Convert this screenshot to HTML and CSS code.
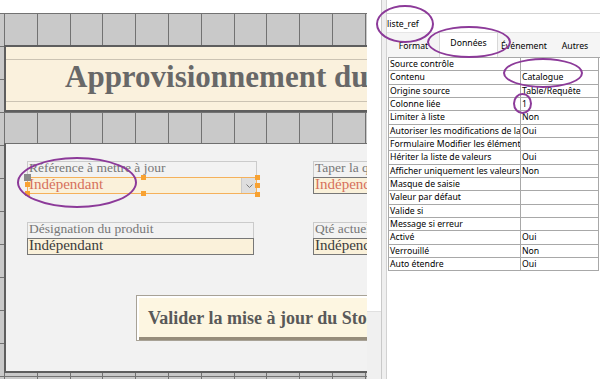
FILE: index.html
```html
<!DOCTYPE html>
<html lang="fr">
<head>
  <meta charset="UTF-8" />
  <meta name="viewport" content="width=device-width, initial-scale=1" />
  <title>Approvisionnement - mode création</title>
  <link rel="stylesheet" href="styles.css">
</head>
<body>

  <div class="screen">

    <div class="designer">
      <div class="grid">

        <div class="head-section">
          <div class="title-box">Approvisionnement du Stock</div>
        </div>

        <div class="detail-section">
          <div class="form">
            <div class="field">
              <div class="label">Référence à mettre à jour</div>
              <div class="input combo">
                <span class="value red">Indépendant</span>
                <span class="drop">
                  <svg width="7" height="4" viewBox="0 0 7 4"><path d="M0.5 0.5 L3.5 3.5 L6.5 0.5" fill="none" stroke="#7a7a7a" stroke-width="1"/></svg>
                </span>
                <span class="handle grab"></span>
                <span class="handle ml"></span>
                <span class="handle bl"></span>
                <span class="handle tm"></span>
                <span class="handle bm"></span>
                <span class="handle tr"></span>
                <span class="handle mr"></span>
                <span class="handle br"></span>
              </div>
            </div>
            <div class="field">
              <div class="label">Taper la quantité à ajouter</div>
              <div class="input"><span class="value red">Indépendant</span></div>
            </div>
            <div class="field short">
              <div class="label">Désignation du produit</div>
              <div class="input"><span class="value">Indépendant</span></div>
            </div>
            <div class="field">
              <div class="label">Qté actuelle en stock</div>
              <div class="input"><span class="value">Indépendant</span></div>
            </div>
          </div>
          <button class="validate">Valider la mise à jour du Stock</button>
        </div>

      </div>
    </div>

    <div class="gutter">
      <div class="gutter-foot"></div>
    </div>

    <div class="props">
      <div class="sheet">
        <div class="name-box">liste_ref</div>
        <div class="tabs">
          <span class="tab t-format">Format</span>
          <span class="tab t-data active">Données</span>
          <span class="tab t-event">Événement</span>
          <span class="tab t-other">Autres</span>
        </div>
        <div class="prop-table">
          <div class="k">Source contrôle</div><div class="v"></div>
          <div class="k">Contenu</div><div class="v">Catalogue</div>
          <div class="k">Origine source</div><div class="v">Table/Requête</div>
          <div class="k">Colonne liée</div><div class="v">1</div>
          <div class="k">Limiter à liste</div><div class="v">Non</div>
          <div class="k">Autoriser les modifications de la liste</div><div class="v">Oui</div>
          <div class="k">Formulaire Modifier les éléments de liste</div><div class="v"></div>
          <div class="k">Hériter la liste de valeurs</div><div class="v">Oui</div>
          <div class="k">Afficher uniquement les valeurs</div><div class="v">Non</div>
          <div class="k">Masque de saisie</div><div class="v"></div>
          <div class="k">Valeur par défaut</div><div class="v"></div>
          <div class="k">Valide si</div><div class="v"></div>
          <div class="k">Message si erreur</div><div class="v"></div>
          <div class="k">Activé</div><div class="v">Oui</div>
          <div class="k">Verrouillé</div><div class="v">Non</div>
          <div class="k">Auto étendre</div><div class="v">Oui</div>
        </div>
      </div>
    </div>

  </div>

  <!-- annotations -->
  <span class="mark mark-name"></span>
  <span class="mark mark-tab"></span>
  <span class="mark mark-source"></span>
  <span class="mark mark-col"></span>
  <span class="mark mark-combo"></span>

</body>
</html>
```

FILE: styles.css
```css
* {
  box-sizing: border-box;
}

body {
  margin: 0;
  width: 600px;
  height: 379px;
  overflow: hidden;
  position: relative;
  background: #fff;
  font-family: "Liberation Serif", serif;
}

.screen {
  display: flex;
  height: 379px;
}

/* form designer */

.designer {
  width: 367px;
  flex: none;
  overflow: hidden;
  background: #fff;
}

.grid {
  margin-top: 13px;
  height: 366px;
  padding-top: 32px;
  background-color: #c9c9c9;
  background-image:
    repeating-linear-gradient(90deg, #727272 0 1px, transparent 1px 32.8px),
    repeating-linear-gradient(180deg, #727272 0 1px, transparent 1px 33px);
  background-position: 4px 0, 0 0;
}

.head-section {
  margin-left: 4px;
  height: 67px;
  border: 2px solid #5e5e5e;
  border-right: 0;
  background: #faf1dd;
  padding-top: 12px;
}

.title-box {
  height: 43px;
  border-top: 1px solid #cbc3b3;
  border-bottom: 1px solid #cbc3b3;
  padding-left: 59px;
  font-size: 31px;
  font-weight: bold;
  line-height: 33px;
  color: #686868;
  white-space: nowrap;
}

.detail-section {
  margin: 31px 0 0 4px;
  height: 230px;
  border-top: 1px solid #6f6f6f;
  border-left: 2px solid #5e5e5e;
  border-bottom: 2px solid #5e5e5e;
  background: #f2f2f2;
  padding: 17px 0 0 21px;
  overflow: hidden;
}

.form {
  display: grid;
  grid-template-columns: 230px 230px;
  column-gap: 56px;
  row-gap: 28px;
  width: 516px;
}

.field.short {
  width: 227px;
}

.label {
  height: 16px;
  border: 1px solid #cbcbcb;
  border-bottom: 0;
  padding-left: 1px;
  font-family: "Liberation Serif", serif;
  font-size: 13.5px;
  line-height: 11px;
  color: #777;
  white-space: nowrap;
  overflow: hidden;
}

.input {
  height: 17px;
  border: 1px solid #777;
  background: #faf1da;
  padding-left: 1px;
  font-family: "Liberation Serif", serif;
  font-size: 15px;
  line-height: 12px;
  color: #3c3c3c;
  white-space: nowrap;
  position: relative;
}

.value {
  font-family: "Liberation Serif", serif;
}

.value.red {
  color: #d6705c;
}

.combo {
  border-color: #f5b15b;
}

.drop {
  position: absolute;
  right: 0;
  top: 0;
  width: 15px;
  height: 15px;
  background: #dedede;
  border-left: 1px solid #cacaca;
  display: flex;
  align-items: center;
  justify-content: center;
}

.handle {
  position: absolute;
  width: 5px;
  height: 5px;
  background: #f8a232;
}

.handle.grab { left: -4px; top: -4px; width: 7px; height: 7px; background: #8a8a8a; }
.handle.ml { left: -3px; top: 4px; }
.handle.bl { left: -3px; top: 13px; }
.handle.tm { left: 113px; top: -3px; }
.handle.bm { left: 113px; top: 13px; }
.handle.tr { left: 227px; top: -3px; }
.handle.mr { left: 227px; top: 5px; }
.handle.br { left: 227px; top: 14px; }

.validate {
  display: block;
  margin: 40px 0 0 109px;
  width: 262px;
  height: 46px;
  padding: 0 0 0 11px;
  background: #fdf6e1;
  border: 1px solid #a8a296;
  box-shadow: inset 2px 2px 0 #fff, inset -2px -3px 0 #978d7b;
  font-family: "Liberation Serif", serif;
  font-size: 18px;
  font-weight: bold;
  color: #595959;
  text-align: left;
  white-space: nowrap;
}

/* strip between designer and property sheet */

.gutter {
  width: 14px;
  flex: none;
  display: flex;
  flex-direction: column;
  justify-content: flex-end;
}

.gutter-foot {
  height: 68px;
  background: #f0f0f0;
  border-top: 1px solid #e0e0e0;
}

/* property sheet */

.props {
  flex: 1;
  display: flex;
  border-left: 1px solid #c9c9c9;
  background: #efefef;
  padding-left: 4px;
}

.sheet {
  flex: 1;
  background: #fff;
  border-left: 1px solid #d2d2d2;
  padding-top: 13px;
  font-family: "Noto Sans", sans-serif;
  font-size: 8.7px;
  color: #000;
}

.name-box {
  height: 20px;
  border-top: 1px solid #d3d3d3;
  border-bottom: 1px solid #e6e6e6;
  padding-left: 0;
  line-height: 20px;
}

.tabs {
  height: 24px;
  display: flex;
  align-items: flex-end;
  background: #f5f5f5;
  padding-left: 1px;
}

.tab {
  height: 21px;
  text-align: center;
  line-height: 20px;
}

.tab.active {
  height: 25px;
  background: #fff;
  border: 1px solid #d8d8d8;
  border-bottom: 0;
  line-height: 20px;
}

.t-format { width: 51px; }
.t-data { width: 59px; }
.t-event { width: 52px; }
.t-other { width: 50px; }

.prop-table {
  display: grid;
  grid-template-columns: 132px 78px;
  grid-auto-rows: 13.33px;
  margin-left: 1px;
  border-top: 1px solid #a8a8a8;
  border-left: 1px solid #a8a8a8;
}

.prop-table .k,
.prop-table .v {
  border-right: 1px solid #a8a8a8;
  border-bottom: 1px solid #a8a8a8;
  padding-left: 1px;
  line-height: 12.3px;
  white-space: nowrap;
  overflow: hidden;
}

/* hand-drawn annotation rings */

.mark {
  position: absolute;
  border: 2px solid #8c3a99;
  border-radius: 50%;
}

.mark-name { left: 376px; top: 5px; width: 58px; height: 38px; }
.mark-tab { left: 427px; top: 26px; width: 84px; height: 32px; }
.mark-source { left: 503px; top: 58px; width: 80px; height: 30px; }
.mark-col { left: 513px; top: 93px; width: 19px; height: 21px; }
.mark-combo { left: 17px; top: 157px; width: 120px; height: 51px; }
```
